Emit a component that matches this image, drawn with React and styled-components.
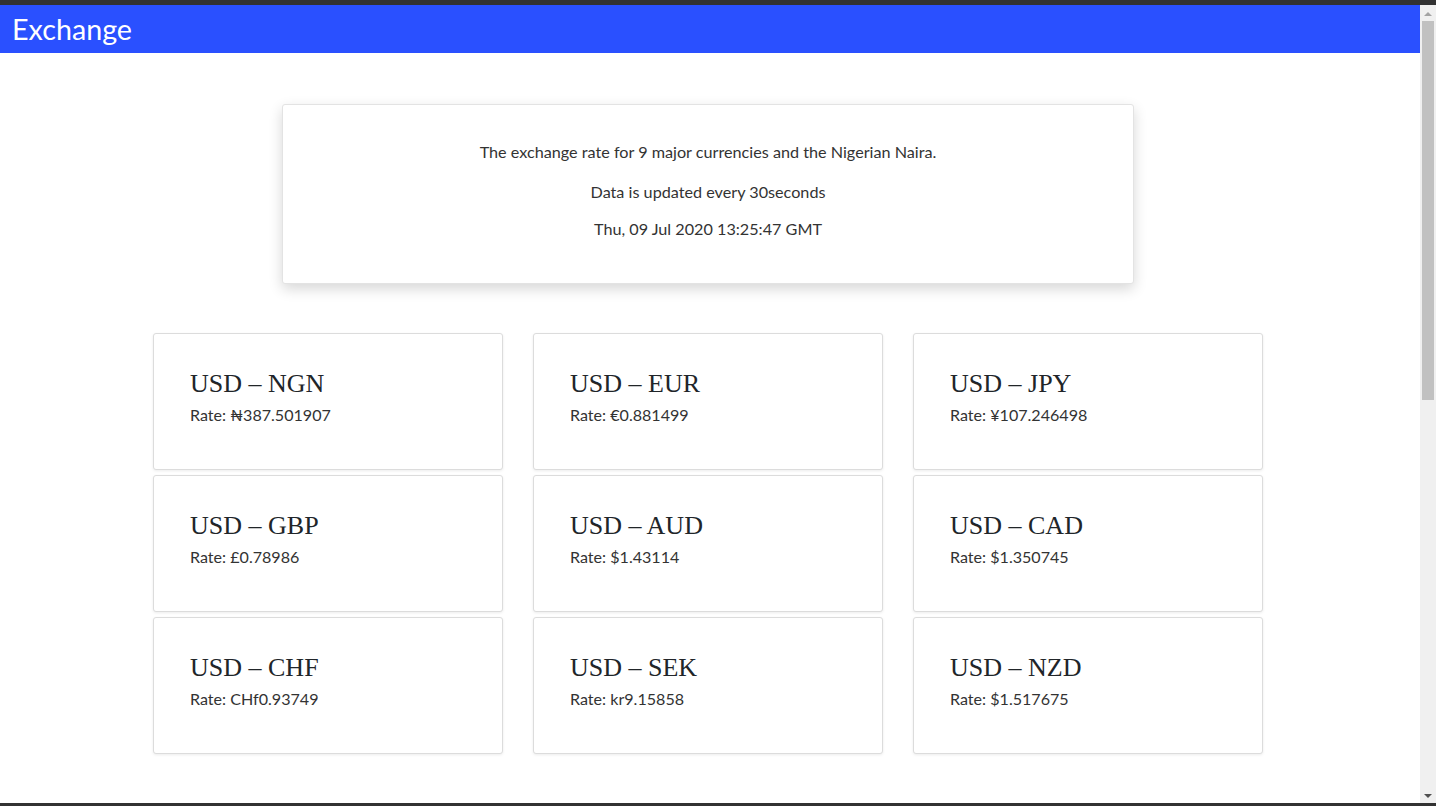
import React from "react";
import styled, { createGlobalStyle } from "styled-components";

const GlobalStyle = createGlobalStyle`
  html, body {
    margin: 0;
    padding: 0;
    height: 100%;
    overflow: hidden;
    background: #323232;
  }
  * { box-sizing: border-box; }
`;

const Frame = styled.div`
  height: 806px;
  display: flex;
  border-top: 5px solid #323232;
  border-bottom: 3px solid #323232;
`;

const Viewport = styled.div`
  flex: 1;
  min-width: 0;
  overflow: hidden;
  background: #ffffff;
  font-family: "Lato", "Noto Sans", sans-serif;
  color: #212529;
`;

const Scrollbar = styled.div`
  width: 16px;
  flex: none;
  background: #f0f0f0;
  display: flex;
  flex-direction: column;
  align-items: center;
  padding: 7px 0 0;
`;

const Arrow = styled.div`
  width: 0;
  height: 0;
  border-left: 4px solid transparent;
  border-right: 4px solid transparent;
  ${(p) =>
    p.$down
      ? "border-top: 4px solid #505050; margin-top: auto; margin-bottom: 5px;"
      : "border-bottom: 4px solid #a3a3a3;"}
`;

const Thumb = styled.div`
  width: 12px;
  height: 379px;
  margin-top: 5px;
  background: #c1c1c1;
`;

const Header = styled.header`
  height: 48px;
  background: #2a50ff;
  display: flex;
  align-items: center;
  padding-left: 12px;
`;

const Brand = styled.h1`
  margin: 0;
  font-family: "Lato", "Noto Sans", sans-serif;
  font-weight: 400;
  font-size: 28.7px;
  color: #ffffff;
`;

const Main = styled.main`
  padding: 51px 4px 40px 0;
  display: flex;
  flex-direction: column;
  align-items: center;
`;

const InfoCard = styled.section`
  width: 852px;
  padding: 36px 20px 43px;
  background: #fff;
  border: 1px solid #e3e3e3;
  border-radius: 3px;
  box-shadow: 0 5px 14px rgba(0, 0, 0, 0.16);
  text-align: center;
  color: #333;
`;

const InfoLine = styled.p`
  margin: 0 0 ${(p) => p.$gap || 0}px;
  font-size: 16.2px;
  line-height: 22px;
`;

const Grid = styled.div`
  margin-top: 49px;
  display: grid;
  grid-template-columns: repeat(3, 350px);
  column-gap: 30px;
  row-gap: 5px;
`;

const RateCard = styled.article`
  height: 137px;
  padding: 35px 36px 0;
  background: #fff;
  border: 1px solid #dcdcdc;
  border-radius: 3px;
  box-shadow: 0 1px 3px rgba(0, 0, 0, 0.08);
`;

const Pair = styled.h2`
  margin: 0 0 5px;
  font-family: "Liberation Serif", "DejaVu Serif", serif;
  font-weight: 400;
  font-size: 26px;
  line-height: 30px;
  color: #212529;
`;

const Rate = styled.p`
  margin: 0;
  font-size: 16.1px;
  line-height: 22px;
  color: #333;
`;

const rates = [
  ["NGN", "₦387.501907"],
  ["EUR", "€0.881499"],
  ["JPY", "¥107.246498"],
  ["GBP", "£0.78986"],
  ["AUD", "$1.43114"],
  ["CAD", "$1.350745"],
  ["CHF", "CHf0.93749"],
  ["SEK", "kr9.15858"],
  ["NZD", "$1.517675"],
];

export default function App() {
  return (
    <>
      <GlobalStyle />
      <Frame>
        <Viewport>
          <Header>
            <Brand>Exchange</Brand>
          </Header>
          <Main>
            <InfoCard>
              <InfoLine $gap={18}>
                The exchange rate for 9 major currencies and the Nigerian Naira.
              </InfoLine>
              <InfoLine $gap={15}>Data is updated every 30seconds</InfoLine>
              <InfoLine>Thu, 09 Jul 2020 13:25:47 GMT</InfoLine>
            </InfoCard>
            <Grid>
              {rates.map(([code, value]) => (
                <RateCard key={code}>
                  <Pair>USD – {code}</Pair>
                  <Rate>Rate: {value}</Rate>
                </RateCard>
              ))}
            </Grid>
          </Main>
        </Viewport>
        <Scrollbar>
          <Arrow />
          <Thumb />
          <Arrow $down />
        </Scrollbar>
      </Frame>
    </>
  );
}
